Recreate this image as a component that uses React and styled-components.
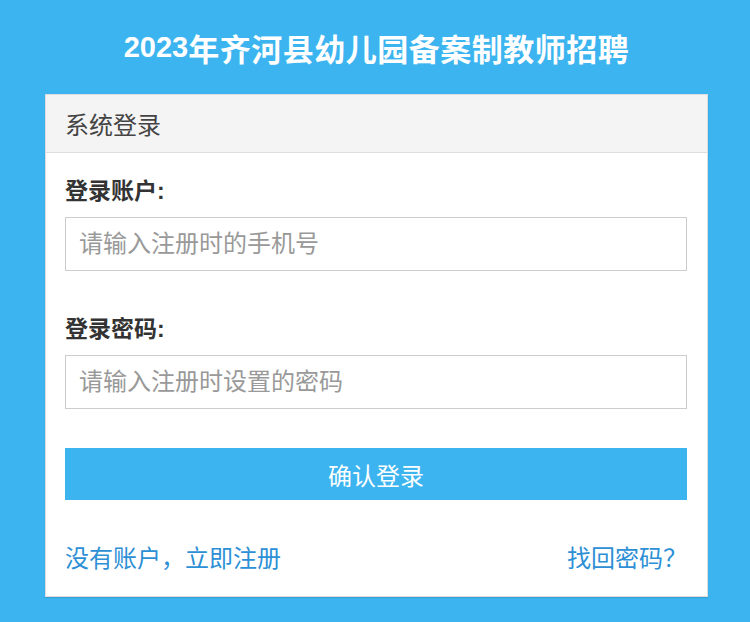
import React from "react";
import styled, { createGlobalStyle } from "styled-components";

const GlobalStyle = createGlobalStyle`
  html, body {
    margin: 0;
    padding: 0;
    background: #3bb4f0;
  }
  body {
    font-family: "Liberation Sans", "Noto Sans CJK SC", sans-serif;
  }
  * {
    box-sizing: border-box;
  }
`;

const Page = styled.div`
  width: 750px;
  height: 622px;
  background: #3bb4f0;
  padding: 0 42px 0 45px;
  overflow: hidden;
`;

const Title = styled.h1`
  margin: 0;
  height: 94px;
  display: flex;
  align-items: center;
  justify-content: center;
  color: #fff;
  font-size: 31px;
  font-weight: bold;
  letter-spacing: 0.5px;
  padding-top: 1px;
`;

const Year = styled.span`
  font-size: 29px;
  letter-spacing: 0;
`;

const Panel = styled.div`
  background: #fff;
  border: 1px solid #ddd;
  height: 503px;
  box-shadow: 0 1px 1px rgba(0, 0, 0, 0.1);
`;

const PanelHead = styled.div`
  height: 58px;
  background: #f4f4f4;
  border-bottom: 1px solid #ddd;
  display: flex;
  align-items: center;
  padding-left: 19px;
  font-size: 24px;
  color: #444;
`;

const PanelBody = styled.div`
  padding: 20px 20px 0 19px;
`;

const Field = styled.div`
  margin-bottom: ${(p) => p.$space}px;
`;

const Label = styled.label`
  display: block;
  font-size: 23px;
  font-weight: bold;
  color: #333;
  line-height: 36px;
  margin-bottom: 8px;
`;

const Input = styled.input`
  display: block;
  width: 100%;
  height: 54px;
  border: 1px solid #ccc;
  padding: 0 13px;
  font-size: 24px;
  font-family: inherit;
  color: #333;
  outline: none;
  &::placeholder {
    color: #999;
  }
`;

const Button = styled.button`
  display: block;
  width: 100%;
  height: 52px;
  border: none;
  background: #3bb4f0;
  color: #fff;
  font-size: 24px;
  font-family: inherit;
  cursor: pointer;
`;

const Links = styled.div`
  display: flex;
  justify-content: space-between;
  align-items: center;
  margin-top: 39px;
  font-size: 24px;
  line-height: 40px;
`;

const Link = styled.a`
  color: #2d8fd5;
  text-decoration: none;
`;

export default function App() {
  return (
    <>
      <GlobalStyle />
      <Page>
        <Title>
          <Year>2023</Year>年齐河县幼儿园备案制教师招聘
        </Title>
        <Panel>
          <PanelHead>系统登录</PanelHead>
          <PanelBody>
            <Field $space={40}>
              <Label>登录账户:</Label>
              <Input placeholder="请输入注册时的手机号" />
            </Field>
            <Field $space={39}>
              <Label>登录密码:</Label>
              <Input type="password" placeholder="请输入注册时设置的密码" />
            </Field>
            <Button>确认登录</Button>
            <Links>
              <Link href="#">没有账户，立即注册</Link>
              <Link href="#">找回密码？</Link>
            </Links>
          </PanelBody>
        </Panel>
      </Page>
    </>
  );
}
